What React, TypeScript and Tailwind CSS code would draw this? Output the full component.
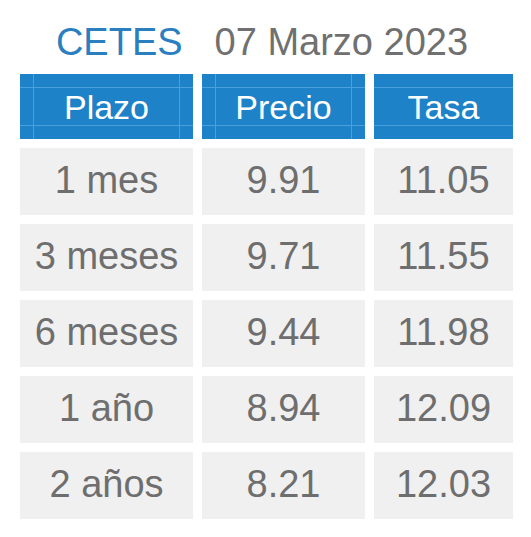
import React from "react";

const rows = [
  ["1 mes", "9.91", "11.05"],
  ["3 meses", "9.71", "11.55"],
  ["6 meses", "9.44", "11.98"],
  ["1 año", "8.94", "12.09"],
  ["2 años", "8.21", "12.03"],
];

function HeaderCell({ label, vertical }: { label: string; vertical: boolean }) {
  return (
    <div className="relative h-[65px] bg-[#1e82c8] flex items-center justify-center">
      <div className="absolute left-0 right-0 top-[13px] h-px bg-[#4a9fdd]" />
      <div className="absolute left-0 right-0 bottom-[13px] h-px bg-[#4a9fdd]" />
      {vertical && (
        <>
          <div className="absolute top-0 bottom-0 left-[13px] w-px bg-[#4a9fdd]" />
          <div className="absolute top-0 bottom-0 right-[13px] w-px bg-[#4a9fdd]" />
        </>
      )}
      <span className="relative text-white text-[34px] leading-none">{label}</span>
    </div>
  );
}

export default function App() {
  return (
    <div
      className="w-[531px] h-[537px] bg-white pt-[23px]"
      style={{ fontFamily: '"Liberation Sans", Arial, sans-serif' }}
    >
      <div className="flex justify-center pr-[7px] text-[38px] leading-none h-[38px]">
        <span className="text-[#2a7fc1]">CETES</span>
        <span className="text-[#707070] ml-[32px]">07 Marzo 2023</span>
      </div>
      <div className="ml-[20px] mt-[13px] grid grid-cols-[173px_163px_139px] gap-[9px]">
        <HeaderCell label="Plazo" vertical />
        <HeaderCell label="Precio" vertical />
        <HeaderCell label="Tasa" vertical={false} />
        {rows.map((r, i) =>
          r.map((c, j) => (
            <div
              key={`${i}-${j}`}
              className="h-[67px] bg-[#f0f0f0] flex items-center justify-center pb-[3px]"
            >
              <span className="text-[#6e6e6e] text-[38px] leading-none">{c}</span>
            </div>
          ))
        )}
      </div>
    </div>
  );
}
